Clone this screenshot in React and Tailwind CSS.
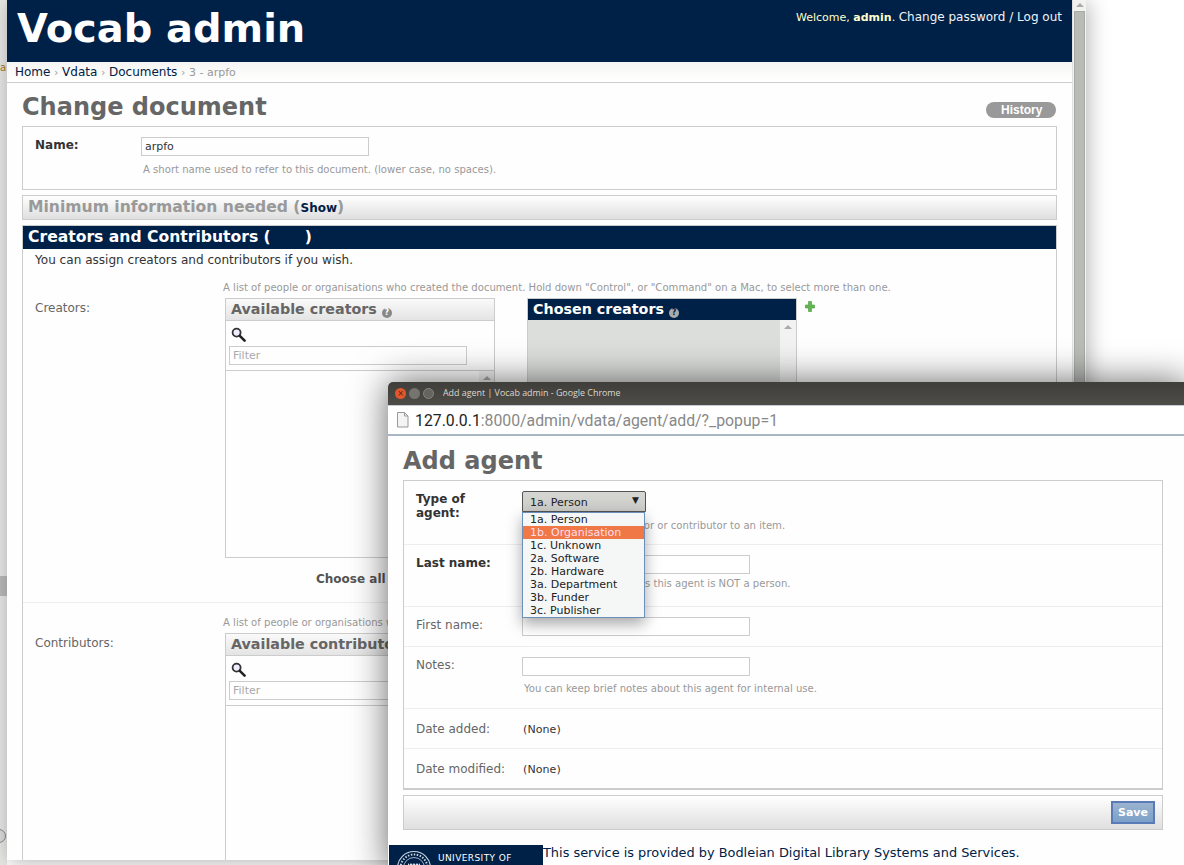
const NAVY = "bg-[#002147]";

// ── Icons ─────────────────────────────────────────────────────────────────────
const Magnifier = () => (
  <svg width="15" height="15" viewBox="0 0 15 15" fill="none">
    <circle cx="5.6" cy="5.6" r="4" stroke="#333" strokeWidth="1.8" fill="#eef" />
    <line x1="8.8" y1="8.8" x2="13.6" y2="13.6" stroke="#222" strokeWidth="2.6" strokeLinecap="round" />
  </svg>
);

const HelpDot = ({ dark }) => (
  <span className={`inline-flex w-[10px] h-[10px] rounded-full items-center justify-center text-[8px] font-bold leading-none ml-[5px] align-[-1px] ${dark ? "bg-[#aaa] text-[#002147]" : "bg-[#888] text-white"}`}>
    ?
  </span>
);

const PlusIcon = () => (
  <svg width="10" height="11" viewBox="0 0 10 11">
    <path d="M3.5 0.5h3v3.5h3v3h-3v3.5h-3v-3.5h-3v-3h3z" fill="#66b554" stroke="#3f9a38" strokeWidth="0.6" />
  </svg>
);

const DocIcon = () => (
  <svg width="13" height="16" viewBox="0 0 13 16" fill="none">
    <path d="M1.5 0.5h7l3.5 3.5v11h-10.5z" fill="#f4f4f4" stroke="#999" />
    <path d="M8.5 0.5v3.5h3.5" stroke="#999" />
  </svg>
);

const Crest = () => (
  <svg width="36" height="36" viewBox="0 0 36 36" fill="none">
    <circle cx="18" cy="18" r="16.5" stroke="#c8d2de" strokeWidth="1.2" />
    <circle cx="18" cy="18" r="13.5" stroke="#c8d2de" strokeWidth="2" strokeDasharray="1.5 1.5" />
    <circle cx="18" cy="18" r="10.5" stroke="#c8d2de" strokeWidth="0.8" />
    <path d="M12 13l1.5 2 1.5-2 1.5 2 1.5-2 1.5 2 1.5-2 1.5 2 1.5-2v4h-12z" fill="#dfe5ec" />
  </svg>
);

// ── Change document window ────────────────────────────────────────────────────
const SelectorPair = ({ label, title }) => (
  <div className="flex h-[322px]">
    <div className="w-[200px] pl-[12px] pt-[21px] text-[12px] leading-[14px] text-[#666] shrink-0">{label}</div>
    <div className="flex-1">
      <p className="text-[10.08px] leading-[12px] text-[#999] pt-[2px] h-[15px] whitespace-nowrap">
        A list of people or organisations who created the document. Hold down "Control", or "Command" on a Mac, to select more than one.
      </p>
      <div className="flex mt-[3px] pl-[2px]">
        <div className="w-[270px] h-[260px] border border-[#ccc] shrink-0 flex flex-col">
          <div className="h-[22px] shrink-0 bg-gradient-to-b from-[#fafafa] to-[#e4e4e4] border-b border-[#ccc] px-[5px] text-[14.3px] leading-[21px] font-bold text-[#666] whitespace-nowrap">
            {title}<HelpDot />
          </div>
          <div className="h-[50px] shrink-0 border-b border-[#ccc] px-[3px]">
            <div className="pl-[2px] pt-[6px] h-[25px]"><Magnifier /></div>
            <div className="w-[238px] h-[19px] border border-[#ccc] text-[11px] leading-[18px] text-[#aaa] pl-[3px]">Filter</div>
          </div>
          <div className="flex-1 flex justify-end">
            <div className="w-[15px] bg-[#f1f2f1] flex justify-center pt-[5px]">
              <span className="w-0 h-0 border-x-[4px] border-x-transparent border-b-[4px] border-b-[#aaa]" />
            </div>
          </div>
        </div>
      </div>
    </div>
  </div>
);

const ChangeWindow = () => (
  <div className="absolute left-[7px] top-0 w-[1079px] h-[860px] bg-[#fefefe] flex overflow-hidden shadow-[2px_2px_20px_rgba(0,0,0,0.3)]">
    <div className="w-[1065px] shrink-0">
      <div className={`${NAVY} h-[62px] flex justify-between`}>
        <h1 className="pl-[10px] pt-[3px] text-[39.9px] leading-[50px] font-bold text-white">Vocab admin</h1>
        <div className="pr-[10px] pt-[9px] text-[11px] leading-[16px] text-[#ffffcc] whitespace-nowrap">
          Welcome, <strong>admin</strong>. <span className="text-[12px] text-[#f0f4f8]">Change password / Log out</span>
        </div>
      </div>
      <div className="h-[21px] border-b border-[#ccc] bg-gradient-to-b from-[#f5f5f3] to-white pl-[8px] text-[12px] leading-[20px] text-[#002147] whitespace-nowrap">
        Home <span className="text-[#999] text-[10px]">›</span> Vdata <span className="text-[#999] text-[10px]">›</span> Documents <span className="text-[#999] text-[10px]">›</span> <span className="text-[11px] text-[#999]">3 - arpfo</span>
      </div>

      <div className="pl-[15px] w-[1050px]">
        <div className="flex justify-between items-start h-[43px] pt-[10px]">
          <h2 className="text-[24px] leading-[29px] font-bold text-[#666] whitespace-nowrap">Change document</h2>
          <span className="mt-[9px] mr-[1px] w-[70px] h-[16px] rounded-full bg-[#999] text-white text-[12px] leading-[16px] font-bold pl-[15px] font-['Liberation_Sans',sans-serif]">History</span>
        </div>

        <div className="h-[64px] border border-[#ccc] flex pl-[12px]">
          <div className="w-[106px] pt-[11px] text-[12px] leading-[15px] font-bold text-[#333]">Name:</div>
          <div className="pt-[10px]">
            <div className="w-[228px] h-[19px] border border-[#ccc] text-[11px] leading-[17px] text-[#333] pl-[3px]">arpfo</div>
            <p className="pl-[2px] pt-[7px] text-[10.08px] leading-[14px] text-[#999]">A short name used to refer to this document. (lower case, no spaces).</p>
          </div>
        </div>

        <div className="mt-[5px] h-[25px] border border-[#ccc] bg-gradient-to-b from-white to-[#dedfde] pl-[5px] text-[15.6px] leading-[23px] font-bold text-[#999] whitespace-nowrap">
          Minimum information needed (<span className="text-[12px] text-[#002147]">Show</span>)
        </div>

        <div className="mt-[5px] border border-[#ccc] h-[640px]">
          <div className={`${NAVY} h-[23px] pl-[5px] text-[15.6px] leading-[23px] font-bold text-white whitespace-nowrap`}>
            Creators and Contributors (<span className="inline-block w-[34px]" />)
          </div>
          <p className="pl-[12px] pt-[4px] h-[31px] text-[12.07px] leading-[15px] text-[#333]">You can assign creators and contributors if you wish.</p>
          <div className="relative border-b border-[#eee]">
            <SelectorPair label="Creators:" title="Available creators" />
            <div className="absolute left-[504px] top-[18px] w-[270px] h-[260px] border border-[#ccc] flex flex-col">
              <div className={`${NAVY} h-[21px] pl-[5px] text-[14.3px] leading-[20px] font-bold text-white whitespace-nowrap shrink-0`}>
                Chosen creators<HelpDot dark />
              </div>
              <div className="flex-1 flex justify-end bg-[#dcdedc]">
                <div className="w-[16px] bg-[#f1f2f1] flex justify-center pt-[5px]">
                  <span className="w-0 h-0 border-x-[4px] border-x-transparent border-b-[4px] border-b-[#aaa]" />
                </div>
              </div>
            </div>
            <div className="absolute left-[782px] top-[21px]"><PlusIcon /></div>
            <div className="absolute left-[293px] top-[292px] text-[12px] leading-[15px] font-bold text-[#555]">Choose all</div>
          </div>
          <div className="pt-[12px]">
            <SelectorPair label="Contributors:" title="Available contributors" />
          </div>
        </div>
      </div>
    </div>

    <div className="w-[14px] shrink-0 bg-[#f2f2f0] border-l border-[#e0e0e0] flex flex-col items-center">
      <span className="mt-[3px] w-0 h-0 border-x-[4px] border-x-transparent border-b-[4px] border-b-[#aaa]" />
      <div className="mt-[4px] w-[11px] flex-1 bg-[#b9bbb7] border border-[#a8aaa6]" />
    </div>
  </div>
);

// ── Add agent popup ───────────────────────────────────────────────────────────
const FormRow = ({ size, label, bold, children, last, low }) => (
  <div className={`flex ${size} ${last ? "" : "border-b border-[#eee]"}`}>
    <div className={`w-[118px] pl-[12px] shrink-0 whitespace-nowrap text-[12px] leading-[14px] ${low ? "pt-[13px]" : "pt-[11px]"} ${bold ? "font-bold text-[#333]" : "text-[#666]"}`}>{label}</div>
    <div className="flex-1 pt-[10px]">{children}</div>
  </div>
);

const TextBox = () => <div className="w-[228px] h-[19px] border border-[#ccc] bg-white" />;

const options = ["1a. Person", "1b. Organisation", "1c. Unknown", "2a. Software", "2b. Hardware", "3a. Department", "3b. Funder", "3c. Publisher"];

const AgentPopup = () => (
  <div className="absolute left-[388px] top-[382px] w-[800px] h-[490px] bg-[#fefefe] shadow-[0_0_36px_rgba(0,0,0,0.6)] rounded-t-[5px]">
    <div className="h-[23px] rounded-t-[5px] bg-gradient-to-b from-[#3f3e3a] to-[#4d4c47] flex items-center pl-[7px]">
      <span className="w-[11px] h-[11px] rounded-full bg-[#e2572b] flex items-center justify-center text-[8px] leading-none text-[#5a2010]">×</span>
      <span className="ml-[3px] w-[11px] h-[11px] rounded-full bg-[#75746e]" />
      <span className="ml-[3px] w-[11px] h-[11px] rounded-full bg-[#65645e] border border-[#85847e]" />
      <span className="ml-[9px] pb-[2px] text-[8.9px] text-[#dcd8cf] whitespace-nowrap font-['Open_Sans',sans-serif]">Add agent | Vocab admin - Google Chrome</span>
    </div>
    <div className="h-[31px] bg-white border-y border-[#c6ccd4] border-b-[#a9b6c6] border-b-2 flex items-center pl-[8px] gap-[6px]">
      <DocIcon />
      <span className="pt-[2px] text-[15.8px] text-[#888] whitespace-nowrap font-['Roboto',sans-serif]"><span className="text-[#222]">127.0.0.1</span>:8000/admin/vdata/agent/add/?_popup=1</span>
    </div>

    <div className="relative pl-[15px] w-[775px]">
      <h2 className="h-[44px] pt-[11px] text-[24px] leading-[29px] font-bold text-[#666]">Add agent</h2>
      <div className="h-[310px] border border-[#ccc] border-b-2">
        <FormRow size="h-[64px]" label={<>Type of<br />agent:</>} bold>
          <p className="pl-[96px] pt-[28px] text-[10.08px] leading-[14px] text-[#999] whitespace-nowrap">creator or contributor to an item.</p>
        </FormRow>
        <FormRow size="h-[62px]" label="Last name:" bold>
          <TextBox />
          <p className="pl-[123px] pt-[3px] text-[10.08px] leading-[14px] text-[#999] whitespace-nowrap">s this agent is NOT a person.</p>
        </FormRow>
        <FormRow size="h-[40px]" label="First name:"><TextBox /></FormRow>
        <FormRow size="h-[62px]" label="Notes:">
          <TextBox />
          <p className="pl-[2px] pt-[6px] text-[10.08px] leading-[14px] text-[#999]">You can keep brief notes about this agent for internal use.</p>
        </FormRow>
        <FormRow size="h-[40px]" label="Date added:" low><p className="pl-[1px] pt-[4px] text-[11px] tracking-[0.1px] leading-[14px] text-[#333]">(None)</p></FormRow>
        <FormRow size="h-[40px]" label="Date modified:" low last><p className="pl-[1px] pt-[4px] text-[11px] tracking-[0.1px] leading-[14px] text-[#333]">(None)</p></FormRow>
      </div>
      <div className="mt-[5px] h-[35px] border border-[#ccc] bg-gradient-to-b from-white to-[#dedfde] flex justify-end items-center pr-[7px]">
        <span className="w-[44px] h-[23px] border-2 border-[#5a7bb5] bg-gradient-to-b from-[#9bb3cf] to-[#7ba0c8] text-white text-[11px] leading-[19px] font-bold text-center">Save</span>
      </div>

      {/* open select sits over the form */}
      <div className="absolute left-[134px] top-[55px] w-[124px]">
        <div className="h-[21px] rounded-t-[2px] border border-[#555] bg-gradient-to-b from-[#d6d6d2] to-[#cbcbc7] flex justify-between pl-[7px] pr-[6px] text-[11px] leading-[21px] text-[#222]">
          <span>1a. Person</span><span className="text-[9px] leading-[17px]">▼</span>
        </div>
        <div className="w-[123px] border border-[#6b8fb8] bg-[#f5f7f6] shadow-[0_6px_14px_rgba(0,0,0,0.35)]">
          {options.map((o) => (
            <div key={o} className={`h-[13px] pl-[7px] text-[11px] leading-[13px] ${o === "1b. Organisation" ? "bg-[#f07746] text-[#fde]" : "text-[#222]"}`}>{o}</div>
          ))}
        </div>
      </div>
    </div>

    <div className="flex mt-[15px] pl-[1px]">
      <div className={`${NAVY} w-[154px] h-[40px] flex pl-[7px] pt-[5px] shrink-0`}>
        <Crest />
        <span className="pl-[6px] pt-[3px] text-[9px] leading-[11px] tracking-[0.4px] text-white whitespace-nowrap">UNIVERSITY OF</span>
      </div>
      <p className="text-[12.9px] leading-[15px] text-[#002147] whitespace-nowrap">This service is provided by Bodleian Digital Library Systems and Services.</p>
    </div>
  </div>
);

export default function App() {
  return (
    <div className="relative w-[1184px] h-[865px] overflow-hidden bg-white font-['DejaVu_Sans',sans-serif]">
      {/* window behind, only its edge shows */}
      <div className="absolute left-0 top-0 w-[7px] h-[865px] bg-[#e8e9e7]">
        <div className="absolute left-0 top-[62px] text-[10px] leading-[12px] text-[#a87a20]">a</div>
        <div className="absolute left-0 top-[576px] w-[7px] h-[20px] bg-[#bbb]" />
        <div className="absolute left-[-8px] top-[829px] w-[14px] h-[14px] rounded-full border border-[#888] bg-[#ddd]" />
      </div>
      <ChangeWindow />
      <AgentPopup />
    </div>
  );
}
